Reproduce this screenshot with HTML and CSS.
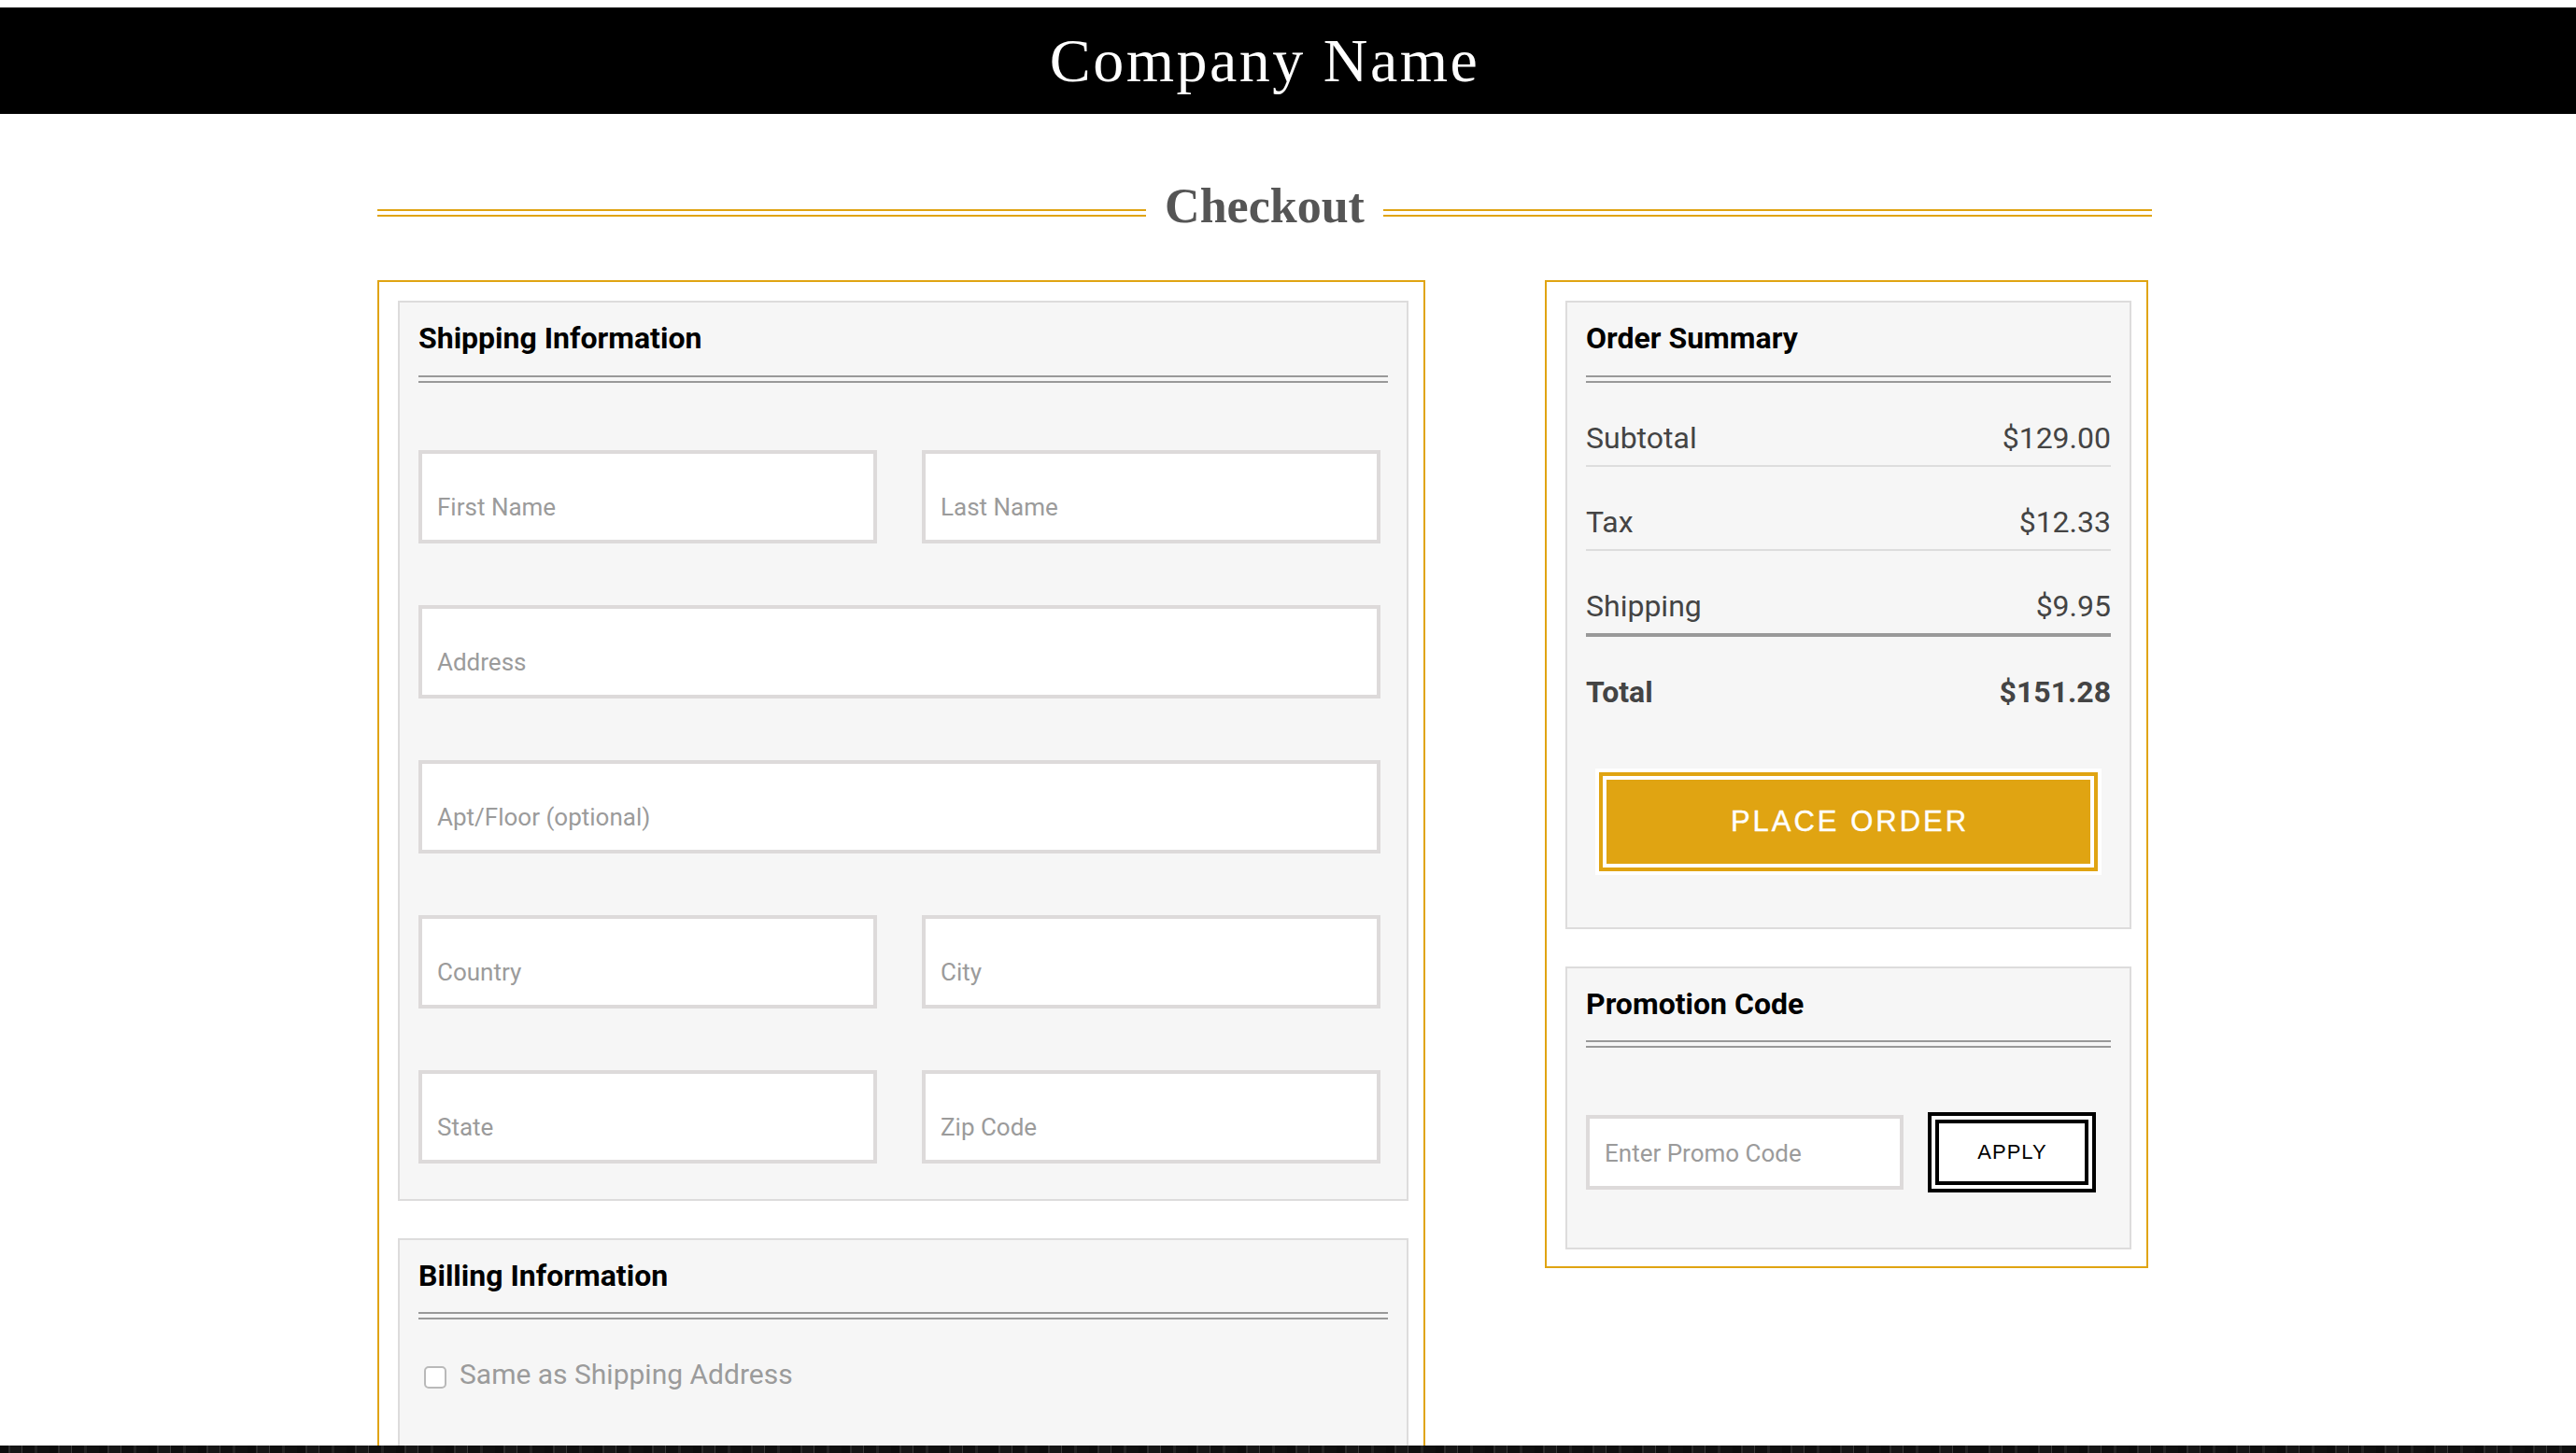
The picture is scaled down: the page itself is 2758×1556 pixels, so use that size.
FILE: index.html
```html
<!DOCTYPE html>
<html lang="en">
<head>
<meta charset="utf-8">
<title>Checkout</title>
<link rel="stylesheet" href="styles.css">
</head>
<body>
<div class="page">
  <header class="site-header">
    <h1 class="brand">Company Name</h1>
  </header>
  <main class="main">
    <div class="container">
      <div class="title-row">
        <span class="title-rule"></span>
        <h2 class="page-title">Checkout</h2>
        <span class="title-rule"></span>
      </div>
      <div class="columns">
        <section class="frame">
          <div class="panel">
            <h3 class="panel-title">Shipping Information</h3>
            <div class="panel-rule"></div>
            <div class="form-grid">
              <input class="field" type="text" placeholder="First Name">
              <input class="field" type="text" placeholder="Last Name">
              <input class="field wide" type="text" placeholder="Address">
              <input class="field wide" type="text" placeholder="Apt/Floor (optional)">
              <input class="field" type="text" placeholder="Country">
              <input class="field" type="text" placeholder="City">
              <input class="field" type="text" placeholder="State">
              <input class="field" type="text" placeholder="Zip Code">
            </div>
          </div>
          <div class="panel panel-billing">
            <h3 class="panel-title">Billing Information</h3>
            <div class="panel-rule"></div>
            <label class="check-row">
              <input class="check" type="checkbox">
              <span>Same as Shipping Address</span>
            </label>
          </div>
        </section>
        <aside class="frame">
          <div class="panel">
            <h3 class="panel-title">Order Summary</h3>
            <div class="panel-rule"></div>
            <div class="sum-row"><span>Subtotal</span><span>$129.00</span></div>
            <div class="sum-row"><span>Tax</span><span>$12.33</span></div>
            <div class="sum-row sum-ship"><span>Shipping</span><span>$9.95</span></div>
            <div class="sum-row sum-total"><span>Total</span><span>$151.28</span></div>
            <button class="place-order" type="button">PLACE ORDER</button>
          </div>
          <div class="panel">
            <h3 class="panel-title">Promotion Code</h3>
            <div class="panel-rule"></div>
            <div class="promo-row">
              <input class="promo-field" type="text" placeholder="Enter Promo Code">
              <button class="apply" type="button">APPLY</button>
            </div>
          </div>
        </aside>
      </div>
    </div>
  </main>
  <footer class="site-footer"></footer>
</div>
</body>
</html>
```

FILE: styles.css
```css
* {
  box-sizing: border-box;
}

html,
body {
  margin: 0;
  padding: 0;
}

body {
  font-family: Roboto, "Liberation Sans", sans-serif;
  background: #fff;
}

.page {
  height: 1556px;
  display: flex;
  flex-direction: column;
  overflow: hidden;
}

.site-header {
  flex: none;
  margin-top: 8px;
  height: 114px;
  background: #000;
  display: flex;
  align-items: center;
  justify-content: center;
  padding-right: 50px;
}

.brand {
  margin: 0;
  font-family: "Liberation Serif", "Times New Roman", serif;
  font-weight: 400;
  font-size: 66px;
  line-height: 66px;
  letter-spacing: 2.5px;
  color: #fff;
}

.main {
  flex: 1;
  min-height: 0;
  overflow: hidden;
  padding-right: 50px;
}

.container {
  width: 1900px;
  margin: 0 auto;
}

.title-row {
  display: flex;
  align-items: flex-start;
  gap: 20px;
  margin-top: 70px;
}

.title-rule {
  flex: 1;
  height: 8px;
  margin-top: 32px;
  border-top: 2px solid #e0a412;
  border-bottom: 2px solid #e0a412;
}

.page-title {
  margin: 0;
  font-family: "Liberation Serif", "Times New Roman", serif;
  font-weight: 700;
  font-size: 52px;
  line-height: 58px;
  color: #555;
}

.columns {
  display: grid;
  grid-template-columns: 1122px 646px;
  column-gap: 128px;
  align-items: start;
  margin-top: 50px;
}

.frame {
  border: 2px solid #e0a412;
  padding: 20px 16px 18px 20px;
  display: flex;
  flex-direction: column;
  gap: 40px;
}

.panel {
  background: #f6f6f6;
  border: 2px solid #dddcdc;
  padding: 20px;
}

.panel-billing {
  min-height: 420px;
}

.panel-title {
  margin: 0;
  font-size: 32px;
  font-weight: 700;
  line-height: 37.5px;
  color: #000;
}

.panel-rule {
  margin-top: 20px;
  height: 8px;
  border-top: 2px solid #999;
  border-bottom: 2px solid #999;
}

.form-grid {
  display: grid;
  grid-template-columns: 491px 491px;
  column-gap: 48px;
  row-gap: 66px;
  margin-top: 72px;
  margin-bottom: 18px;
}

.field,
.promo-field {
  display: block;
  width: 100%;
  height: 100px;
  margin: 0;
  border: 4px solid #dddada;
  border-radius: 0;
  background: #fff;
  padding: 42px 16px 20px;
  font-family: Roboto, "Liberation Sans", sans-serif;
  font-size: 26px;
  color: #333;
  outline: none;
}

.field.wide {
  grid-column: 1 / -1;
}

.field::placeholder,
.promo-field::placeholder {
  color: #9b9b9b;
  opacity: 1;
}

.check-row {
  display: flex;
  align-items: flex-start;
  gap: 14px;
  margin-top: 41px;
  font-size: 30px;
  line-height: 35px;
  color: #9b9b9b;
}

.check {
  appearance: none;
  -webkit-appearance: none;
  flex: none;
  width: 24px;
  height: 24px;
  margin: 9px 0 0 6px;
  border: 2px solid #b9b9b9;
  border-radius: 5px;
  background: #fff;
}

.sum-row {
  display: flex;
  justify-content: space-between;
  padding: 40px 0 10px;
  border-bottom: 2px solid #dddddd;
  font-size: 32px;
  line-height: 38px;
  color: #444;
}

.sum-ship {
  border-bottom: 4px solid #999;
}

.sum-total {
  border-bottom: none;
  font-weight: 700;
}

.place-order {
  display: block;
  width: 526px;
  height: 98px;
  margin: 61px auto 44px;
  padding: 0 0 0 3px;
  background: #e0a412;
  border: 4px solid #fff;
  border-radius: 0;
  box-shadow: 0 0 0 4px #e0a412, 0 0 0 8px #fff;
  color: #fff;
  font-family: "Liberation Sans", Arial, sans-serif;
  font-size: 31px;
  letter-spacing: 3px;
  -webkit-text-stroke: 0.4px #fff;
  cursor: pointer;
}

.promo-row {
  display: flex;
  align-items: center;
  margin-top: 72px;
  margin-bottom: 42px;
}

.promo-field {
  flex: none;
  width: 340px;
  height: 80px;
  padding: 22px 16px 20px;
}

.apply {
  flex: none;
  width: 164px;
  height: 70px;
  margin-left: 34px;
  padding: 0 0 0 1px;
  background: #fff;
  border: 4px solid #000;
  border-radius: 0;
  box-shadow: 0 0 0 4px #fff, 0 0 0 8px #000;
  color: #000;
  font-family: "Liberation Sans", Arial, sans-serif;
  font-size: 22px;
  letter-spacing: 1px;
  cursor: pointer;
}

.site-footer {
  flex: none;
  height: 8px;
  background-color: #121212;
  background-image: repeating-linear-gradient(90deg, #0c0c0c 0 9px, #2b2b2b 9px 11px, #161616 11px 23px, #3a3a3a 23px 24px, #0f0f0f 24px 37px, #222 37px 40px, #101010 40px 53px);
}
```
